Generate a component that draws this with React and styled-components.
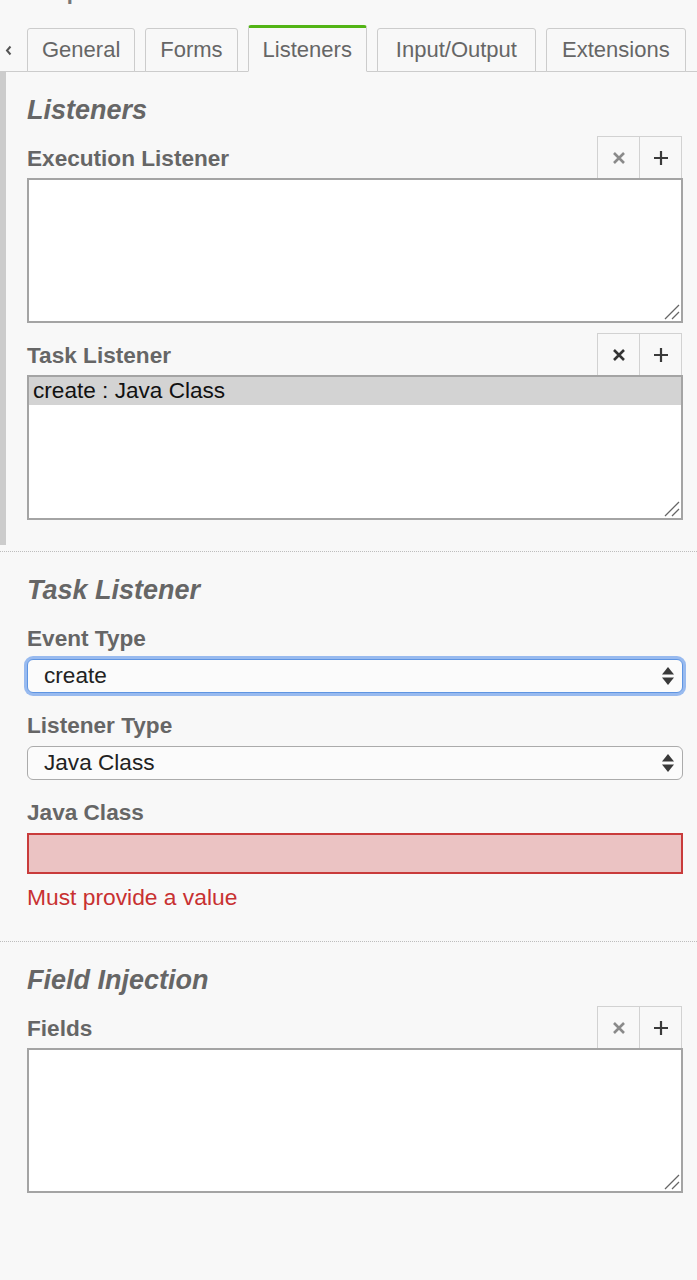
import React from "react";
import styled, { createGlobalStyle } from "styled-components";

const GlobalStyle = createGlobalStyle`
  html, body { margin: 0; padding: 0; background: #f8f8f8; }
  body { font-family: "Liberation Sans", Arial, Helvetica, sans-serif; color: #666; }
  * { box-sizing: border-box; }
`;

const Page = styled.div`
  width: 697px;
  min-height: 1280px;
  background: #f8f8f8;
  overflow: hidden;
`;

const Header = styled.div`
  height: 25px;
  overflow: hidden;
  padding-left: 30px;
`;

const HeaderText = styled.div`
  margin-top: -21px;
  font-size: 22px;
  line-height: 26px;
  font-weight: bold;
  color: #777;
`;

const TabBar = styled.div`
  display: flex;
  align-items: flex-end;
  gap: 10px;
  height: 47px;
  border-bottom: 1px solid #cccccc;
`;

const TabArrow = styled.div`
  width: 17px;
  height: 44px;
  display: flex;
  align-items: center;
  padding-left: 5px;
  margin-bottom: -1px;
`;

const Tab = styled.div`
  height: ${(p) => (p.$active ? 47 : 44)}px;
  min-width: ${(p) => p.$minWidth || 0}px;
  margin-bottom: -1px;
  padding: 0 14px;
  display: flex;
  align-items: center;
  justify-content: center;
  font-size: 22px;
  color: #666;
  background: #f8f8f8;
  border: 1px solid #cccccc;
  border-top: ${(p) => (p.$active ? "3px solid #52b415" : "1px solid #cccccc")};
  border-bottom-color: ${(p) => (p.$active ? "#f8f8f8" : "#cccccc")};
  border-radius: 3px 3px 0 0;
  white-space: nowrap;
  flex-shrink: 0;
`;

const Block = styled.div`
  padding-bottom: 6px;
  border-bottom: ${(p) => (p.$last ? "none" : "1px dotted #bdbdbd")};
`;

const Section = styled.div`
  padding: 22px 14px 25px ${(p) => (p.$active ? 21 : 27)}px;
  border-left: ${(p) => (p.$active ? "6px solid #cccccc" : "none")};
`;

const Heading = styled.div`
  font-size: 27px;
  line-height: 32px;
  font-weight: bold;
  font-style: italic;
  color: #666;
  margin-bottom: ${(p) => p.$gap}px;
`;

const Label = styled.div`
  font-size: 22.6px;
  line-height: 26px;
  font-weight: bold;
  color: #666;
`;

const ListGroup = styled.div`
  & + & { margin-top: 10px; }
`;

const ListHeader = styled.div`
  height: 42px;
  display: flex;
  align-items: flex-end;
  justify-content: space-between;
  padding-bottom: 6px;
`;

const ButtonGroup = styled.div`
  display: flex;
  align-self: stretch;
  margin-bottom: -6px;
  margin-right: 1px;
`;

const IconButton = styled.div`
  width: 43px;
  height: 42px;
  display: flex;
  align-items: center;
  justify-content: center;
  border: 1px solid #d2d2d2;
  border-bottom: none;
  background: #f8f8f8;
  & + & { margin-left: -1px; }
`;

const ListBox = styled.div`
  position: relative;
  height: 145px;
  background: #ffffff;
  border: 2px solid #a4a4a4;
`;

const ListItem = styled.div`
  height: 28px;
  line-height: 28px;
  padding-left: 4px;
  font-size: 22.6px;
  color: #111;
  background: ${(p) => (p.$selected ? "#d3d3d3" : "transparent")};
`;

const Grip = styled.svg`
  position: absolute;
  right: 1px;
  bottom: 1px;
`;

const Field = styled.div`
  & + & { margin-top: 20px; }
`;

const FieldLabel = styled(Label)`
  margin-bottom: 7px;
`;

const SelectBox = styled.div`
  height: 34px;
  display: flex;
  align-items: center;
  justify-content: space-between;
  padding: 0 7px 0 16px;
  font-size: 22.6px;
  color: #222;
  background: #fbfbfb;
  border-radius: 6px;
  border: 1px solid ${(p) => (p.$focused ? "#5f95e2" : "#ababab")};
  box-shadow: ${(p) => (p.$focused ? "0 0 0 3px rgba(120, 166, 236, 0.75)" : "none")};
`;

const ErrorInput = styled.div`
  height: 41px;
  background: #ebc3c3;
  border: 2px solid #c93b3b;
`;

const ErrorText = styled.div`
  margin-top: 10px;
  font-size: 22.8px;
  line-height: 26px;
  color: #c83131;
`;

const Arrows = () => (
  <svg width="14" height="20" viewBox="0 0 14 20">
    <polygon points="7,1 13,8.5 1,8.5" fill="#3a3a3a" />
    <polygon points="1,11.5 13,11.5 7,19" fill="#3a3a3a" />
  </svg>
);

const CloseIcon = ({ color }) => (
  <svg width="14" height="14" viewBox="0 0 14 14">
    <path d="M2 2 L12 12 M12 2 L2 12" stroke={color} strokeWidth="2.6" strokeLinecap="butt" />
  </svg>
);

const PlusIcon = () => (
  <svg width="16" height="16" viewBox="0 0 16 16">
    <path d="M8 1 V15 M1 8 H15" stroke="#3a3a3a" strokeWidth="2.2" />
  </svg>
);

const ResizeGrip = () => (
  <Grip width="16" height="16" viewBox="0 0 16 16">
    <path d="M1 15 L15 1 M8 15 L15 8" stroke="#666" strokeWidth="1.3" />
  </Grip>
);

const ListField = ({ label, items = [], canRemove }) => (
  <ListGroup>
    <ListHeader>
      <Label>{label}</Label>
      <ButtonGroup>
        <IconButton>
          <CloseIcon color={canRemove ? "#333" : "#8a8a8a"} />
        </IconButton>
        <IconButton>
          <PlusIcon />
        </IconButton>
      </ButtonGroup>
    </ListHeader>
    <ListBox>
      {items.map((it) => (
        <ListItem key={it.text} $selected={it.selected}>
          {it.text}
        </ListItem>
      ))}
      <ResizeGrip />
    </ListBox>
  </ListGroup>
);

const tabs = [
  { name: "General", w: 108 },
  { name: "Forms", w: 92 },
  { name: "Listeners", w: 119 },
  { name: "Input/Output", w: 159 },
  { name: "Extensions", w: 140 },
];

export default function App() {
  return (
    <Page>
      <GlobalStyle />
      <Header>
        <HeaderText>Properties</HeaderText>
      </Header>
      <TabBar>
        <TabArrow>
          <svg width="7" height="11" viewBox="0 0 7 11">
            <path d="M5.5 1.5 L2 5.5 L5.5 9.5" stroke="#555" strokeWidth="2" fill="none" />
          </svg>
        </TabArrow>
        {tabs.map((t) => (
          <Tab key={t.name} $minWidth={t.w} $active={t.name === "Listeners"}>
            {t.name}
          </Tab>
        ))}
      </TabBar>

      <Block>
        <Section $active>
          <Heading $gap={10}>Listeners</Heading>
          <ListField label="Execution Listener" />
          <ListField
            label="Task Listener"
            canRemove
            items={[{ text: "create : Java Class", selected: true }]}
          />
        </Section>
      </Block>

      <Block>
        <Section>
          <Heading $gap={20}>Task Listener</Heading>
          <Field>
            <FieldLabel>Event Type</FieldLabel>
            <SelectBox $focused>
              <span>create</span>
              <Arrows />
            </SelectBox>
          </Field>
          <Field>
            <FieldLabel>Listener Type</FieldLabel>
            <SelectBox>
              <span>Java Class</span>
              <Arrows />
            </SelectBox>
          </Field>
          <Field>
            <FieldLabel>Java Class</FieldLabel>
            <ErrorInput />
            <ErrorText>Must provide a value</ErrorText>
          </Field>
        </Section>
      </Block>

      <Block $last>
        <Section>
          <Heading $gap={10}>Field Injection</Heading>
          <ListField label="Fields" />
        </Section>
      </Block>
    </Page>
  );
}
